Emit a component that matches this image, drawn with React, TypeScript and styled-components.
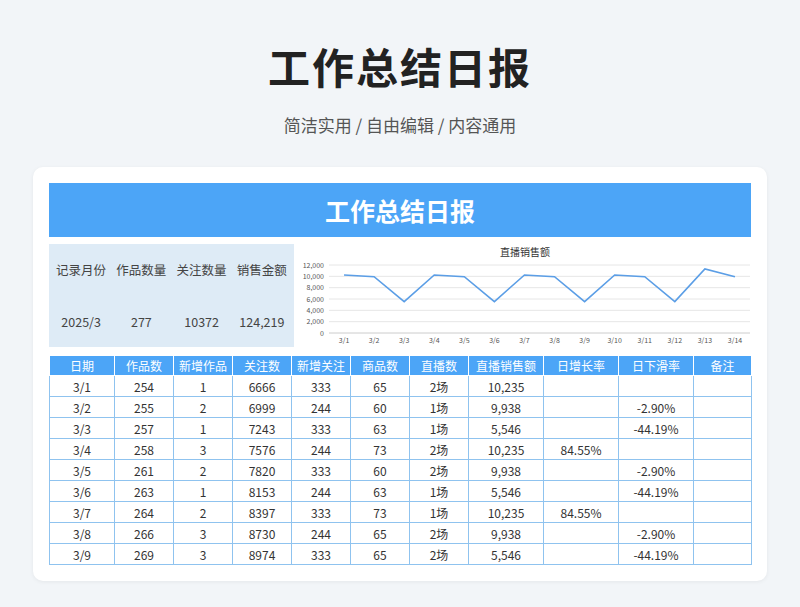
import styled, { createGlobalStyle } from 'styled-components';

const Global = createGlobalStyle`
  body {
    margin: 0;
    background: #f2f5f8;
    font-family: "Noto Sans CJK SC", "Noto Sans", sans-serif;
  }
`;

const Page = styled.div`
  width: 800px;
  height: 607px;
  display: flex;
  flex-direction: column;
  align-items: center;
`;

const Title = styled.h1`
  margin: 37px 0 0;
  font-size: 42px;
  line-height: 58px;
  font-weight: 700;
  color: #222;
  letter-spacing: 2px;
`;

const Subtitle = styled.div`
  margin-top: 18px;
  font-size: 17px;
  line-height: 24px;
  color: #555;
`;

const Card = styled.div`
  margin-top: 30px;
  width: 702px;
  padding: 16px;
  background: #fff;
  border-radius: 10px;
  box-shadow: 0 1px 4px rgba(0, 0, 0, 0.06);
`;

const Banner = styled.div`
  height: 54px;
  background: #4ca5f7;
  color: #fff;
  font-size: 25px;
  font-weight: 700;
  display: flex;
  align-items: center;
  justify-content: center;
`;

const TopRow = styled.div`
  display: flex;
  gap: 5px;
  margin-top: 7px;
  height: 103px;
`;

const Summary = styled.div`
  width: 241px;
  background: #deebf6;
  display: grid;
  grid-template-columns: repeat(4, 1fr);
  grid-template-rows: 1fr 1fr;
  align-items: center;
  justify-items: center;
  font-size: 12.5px;
  color: #444;
  padding: 0 2px;
`;

const Chart = styled.div`
  flex: 1;
  display: flex;
  flex-direction: column;
  align-items: center;
  overflow: hidden;
`;

const ChartTitle = styled.div`
  font-size: 10px;
  color: #333;
  margin-top: 1px;
  line-height: 14px;
`;

const Table = styled.table`
  margin-top: 9px;
  width: 702px;
  border-collapse: collapse;
  table-layout: fixed;
  font-size: 12px;
  color: #333;
  td, th {
    border: 1px solid #8fc3ef;
    text-align: center;
    padding: 0;
  }
`;

const Head = styled.th`
  background: #4ca5f7;
  color: #fff;
  font-weight: 400;
  height: 19px;
  border-color: #fff !important;
  border-top: none !important;
`;

const Cell = styled.td`
  height: 20px;
`;

const sales = [10235, 9938, 5546, 10235, 9938, 5546, 10235, 9938, 5546, 10235, 9938, 5546, 11300, 9938];

function LineChart() {
  const w = 456, left = 32, right = 453, top = 6, bottom = 74;
  const step = (right - left) / 14;
  const y = (v: number) => bottom - (v / 12000) * (bottom - top);
  const pts = sales.map((v, i) => `${left + step * (i + 0.5)},${y(v)}`).join(' ');
  return (
    <svg width={w} height={88}>
      {[0, 2000, 4000, 6000, 8000, 10000, 12000].map(v => (
        <g key={v}>
          <line x1={left} x2={right} y1={y(v)} y2={y(v)} stroke={v ? '#e6e6e6' : '#ccc'} />
          <text x={left - 5} y={y(v) + 2.5} fontSize="7" textAnchor="end" fill="#555">
            {v.toLocaleString('en-US')}
          </text>
        </g>
      ))}
      {sales.map((_, i) => (
        <text key={i} x={left + step * (i + 0.5)} y={bottom + 10} fontSize="7" textAnchor="middle" fill="#555">
          3/{i + 1}
        </text>
      ))}
      <polyline points={pts} fill="none" stroke="#5b9ee6" strokeWidth="1.6" />
    </svg>
  );
}

const heads = ['日期', '作品数', '新增作品', '关注数', '新增关注', '商品数', '直播数', '直播销售额', '日增长率', '日下滑率', '备注'];
const widths = [65, 59, 59, 59, 59, 59, 59, 75, 75, 75, 58];
const rows = [
  ['3/1', '254', '1', '6666', '333', '65', '2场', '10,235', '', '', ''],
  ['3/2', '255', '2', '6999', '244', '60', '1场', '9,938', '', '-2.90%', ''],
  ['3/3', '257', '1', '7243', '333', '63', '1场', '5,546', '', '-44.19%', ''],
  ['3/4', '258', '3', '7576', '244', '73', '2场', '10,235', '84.55%', '', ''],
  ['3/5', '261', '2', '7820', '333', '60', '2场', '9,938', '', '-2.90%', ''],
  ['3/6', '263', '1', '8153', '244', '63', '1场', '5,546', '', '-44.19%', ''],
  ['3/7', '264', '2', '8397', '333', '73', '1场', '10,235', '84.55%', '', ''],
  ['3/8', '266', '3', '8730', '244', '65', '2场', '9,938', '', '-2.90%', ''],
  ['3/9', '269', '3', '8974', '333', '65', '2场', '5,546', '', '-44.19%', ''],
];

export default function App() {
  return (
    <Page>
      <Global />
      <Title>工作总结日报</Title>
      <Subtitle>简洁实用 / 自由编辑 / 内容通用</Subtitle>
      <Card>
        <Banner>工作总结日报</Banner>
        <TopRow>
          <Summary>
            <span>记录月份</span><span>作品数量</span><span>关注数量</span><span>销售金额</span>
            <span>2025/3</span><span>277</span><span>10372</span><span>124,219</span>
          </Summary>
          <Chart>
            <ChartTitle>直播销售额</ChartTitle>
            <LineChart />
          </Chart>
        </TopRow>
        <Table>
          <colgroup>
            {widths.map((w, i) => <col key={i} style={{ width: w }} />)}
          </colgroup>
          <thead>
            <tr>{heads.map(h => <Head key={h}>{h}</Head>)}</tr>
          </thead>
          <tbody>
            {rows.map(r => (
              <tr key={r[0]}>{r.map((c, i) => <Cell key={i}>{c}</Cell>)}</tr>
            ))}
          </tbody>
        </Table>
      </Card>
    </Page>
  );
}
